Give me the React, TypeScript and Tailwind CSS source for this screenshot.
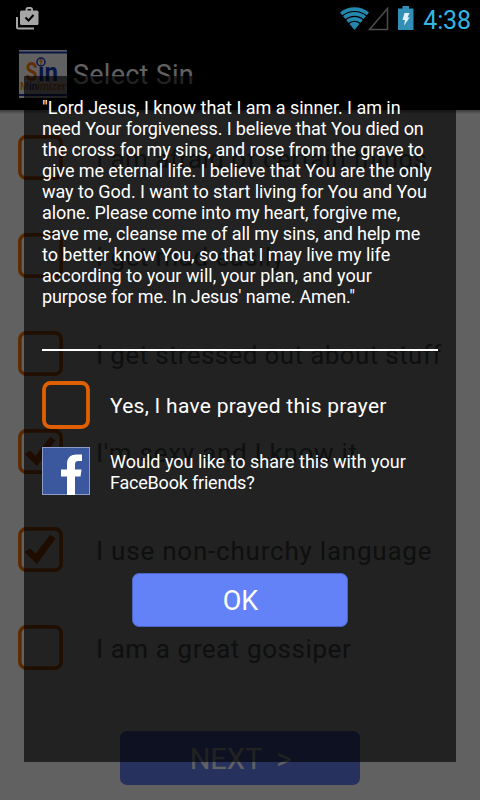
import clsx from "clsx";

const sins = [
  { label: "I am afraid of certain things", checked: false, tracking: "tracking-[0.45px]" },
  { label: "I get mad easily", checked: false, tracking: "tracking-[0.45px]" },
  { label: "I get stressed out about stuff", checked: false, tracking: "tracking-[0.38px]" },
  { label: "I'm sexy and I know it", checked: true, tracking: "tracking-[0.73px]" },
  { label: "I use non-churchy language", checked: true, tracking: "tracking-[0.78px]" },
  { label: "I am a great gossiper", checked: false, tracking: "tracking-[0.57px]" },
];

const prayer = [
  { text: "\"Lord Jesus, I know that I am a sinner. I am in", tracking: "tracking-[-0.02px]" },
  { text: "need Your forgiveness. I believe that You died on", tracking: "tracking-[-0.1px]" },
  { text: "the cross for my sins, and rose from the grave to", tracking: "tracking-[-0.08px]" },
  { text: "give me eternal life. I believe that You are the only", tracking: "tracking-[-0.07px]" },
  { text: "way to God. I want to start living for You and You", tracking: "tracking-[-0.04px]" },
  { text: "alone. Please come into my heart, forgive me,", tracking: "tracking-[-0.1px]" },
  { text: "save me, cleanse me of all my sins, and help me", tracking: "tracking-[-0.1px]" },
  { text: "to better know You, so that I may live my life", tracking: "tracking-[-0.04px]" },
  { text: "according to your will, your plan, and your", tracking: "tracking-[0.03px]" },
  { text: "purpose for me. In Jesus' name. Amen.\"", tracking: "tracking-[-0.1px]" },
];

function CheckBox({ checked = false, className }: { checked?: boolean; className: string }) {
  return (
    <svg viewBox="0 0 48 48" fill="none" className={clsx("shrink-0", className)}>
      <rect x="2" y="2" width="44" height="44" rx="6.5" stroke="currentColor" strokeWidth="3.8" />
      {checked && (
        <path
          d="M8 26.700L12.800 23.800L19 29.500L34.500 9.200L39 12.300L20.200 38.500z"
          fill="#e46000"
          stroke="#e46000"
          strokeWidth="1.500"
          strokeLinejoin="round"
        />
      )}
    </svg>
  );
}

function StatusBar() {
  return (
    <div className="flex h-[38px] items-start bg-black pl-4 pr-[9px]">
      <svg className="mt-[6px] h-6 w-6" viewBox="0 0 24 24" fill="none">
        <path d="M1 11v10a1.5 1.5 0 0 0 1.500 1.500H18" stroke="#a6a6a6" strokeWidth="2" />
        <path d="M10.500 5V3.500a1.500 1.500 0 0 1 1.500-1.500h2.500a1.500 1.500 0 0 1 1.500 1.500V5" stroke="#a6a6a6" strokeWidth="2" />
        <rect x="4" y="4.500" width="18.500" height="14.500" rx="1.500" fill="#a6a6a6" />
        <path d="M9.500 11.500l3 3 5-5.500" stroke="#000" strokeWidth="2" />
      </svg>
      <div className="ml-auto flex items-start">
        <svg className="mt-[7px] h-[23px] w-[29px]" viewBox="0 0 29 23">
          <path d="M14.500 23L0 5.500C8-1.500 21-1.500 29 5.500z" fill="#2487ad" />
          <g fill="none" stroke="#000" strokeWidth="1.200">
            <path d="M2 9.200c7-6.300 18-6.300 25 0" />
            <path d="M5 13.200c5.500-5 13.500-5 19 0" />
            <path d="M8 17c4-3.600 9-3.600 13 0" />
          </g>
        </svg>
        <svg className="ml-[-1px] mt-[7px] h-[24px] w-[21px]" viewBox="0 0 21 24" fill="none">
          <path d="M19.500 1.500v21H1.500z" stroke="#4d4d4d" strokeWidth="1.500" />
        </svg>
        <svg className="ml-[9px] mt-[6px] h-6 w-4" viewBox="0 0 16 24">
          <path d="M4.500 0h6.500v2.500h4.500V24H0V2.500h4.500z" fill="#318fb5" />
          <path d="M6.500 7h5L9.500 11.500h2.200L6 19.500l1-5.500H4.500z" fill="#e3f1f6" />
        </svg>
        <span className="ml-[9px] mt-[6px] text-[25px] leading-[30px] tracking-[-0.1px] text-[#33b5e5]">4:38</span>
      </div>
    </div>
  );
}

function AppLogo() {
  return (
    <svg className="h-12 w-12" viewBox="0 0 48 48">
      <rect width="48" height="48" fill="#fff" />
      <rect y="1.500" width="48" height="2" fill="#1838b8" />
      <rect y="44" width="48" height="2" fill="#1838b8" />
      <text x="6.500" y="31" fontSize="25" fontWeight="700" fill="#ff7a10" textLength="12" lengthAdjust="spacingAndGlyphs">S</text>
      <text x="19" y="31" fontSize="25" fontWeight="700" fill="#1838b8" textLength="20" lengthAdjust="spacingAndGlyphs">ın</text>
      <circle cx="22" cy="12" r="4" fill="#fff" stroke="#1838b8" strokeWidth="1.500" />
      <path d="M22 9v6M20 11h4" stroke="#ff7a10" strokeWidth="1.200" />
      <text x="1" y="39.500" fontSize="10.500" fontWeight="500" fill="#ff7a10" textLength="46" lengthAdjust="spacingAndGlyphs">
        M<tspan fill="#1838b8">in</tspan>imizer
      </text>
    </svg>
  );
}

function PrayerDialog() {
  return (
    <div className="absolute left-6 top-[76px] flex h-[686px] w-[432px] flex-col bg-black/65 px-[18px] pt-[21px] text-white">
      <div className="whitespace-nowrap text-[18px] leading-[21px]">
        {prayer.map((line) => (
          <div key={line.text} className={line.tracking}>{line.text}</div>
        ))}
      </div>
      <div className="mt-[42px] h-[2px] shrink-0 bg-white" />
      <label className="mt-[30px] flex items-center gap-5">
        <CheckBox className="h-12 w-12 text-[#df6003]" />
        <span className="whitespace-nowrap pt-[3px] text-[21px] tracking-[0.27px]">Yes, I have prayed this prayer</span>
      </label>
      <div className="mt-[18px] flex items-center gap-5">
        <svg className="h-12 w-12 shrink-0" viewBox="0 0 48 48">
          <rect x="0.500" y="0.500" width="47" height="47" fill="#3b579d" stroke="#8d9dc8" />
          <path d="M25 48V29.500h-6V22.500h6V17c0-6.500 4-9.500 9.500-9.500H40v6.500h-3.500c-2.500 0-3.500 1-3.500 3.500v5h6.500l-1 7H33V48z" fill="#fff" />
        </svg>
        <p className="whitespace-nowrap pt-px text-[18px] leading-[21px]">
          Would you like to share this with your
          <br />
          <span className="tracking-[-0.2px]">FaceBook friends?</span>
        </p>
      </div>
      <button className="mx-auto mt-[78px] h-[54px] w-[216px] rounded-[7px] border border-[#4a62c0] bg-[#6482f8] pl-px pt-[2px] text-[27px]">
        OK
      </button>
    </div>
  );
}

export default function App() {
  return (
    <div className="relative h-[800px] w-[480px] overflow-hidden bg-white font-['Roboto',sans-serif]">
      <StatusBar />
      <header className="flex h-[72px] items-center gap-[6px] bg-black pl-[19px] text-white">
        <AppLogo />
        <h1 className="pt-[3px] text-[27px] tracking-[0.25px]">Select Sin</h1>
      </header>
      <main className="bg-linear-to-b from-[#999] to-white to-[4px]">
        <ul className="pt-[25px]">
          {sins.map((sin) => (
            <li key={sin.label} className="flex h-[98px] items-start pl-[18px]">
              <CheckBox checked={sin.checked} className="h-[45px] w-[45px] text-[#f47000]" />
              <span className={clsx("ml-[33px] whitespace-nowrap pt-[7px] text-[26px] leading-[34px] text-[#707878]", sin.tracking)}>
                {sin.label}
              </span>
            </li>
          ))}
        </ul>
        <button className="mx-auto mt-[8px] block h-[54px] w-[240px] rounded-[7px] bg-[#6482f8] pl-px pt-[4px] text-[29px] whitespace-pre text-white">
          {"NEXT  >"}
        </button>
      </main>
      <div className="absolute inset-x-0 bottom-0 top-[38px] bg-black/62" />
      <PrayerDialog />
    </div>
  );
}
